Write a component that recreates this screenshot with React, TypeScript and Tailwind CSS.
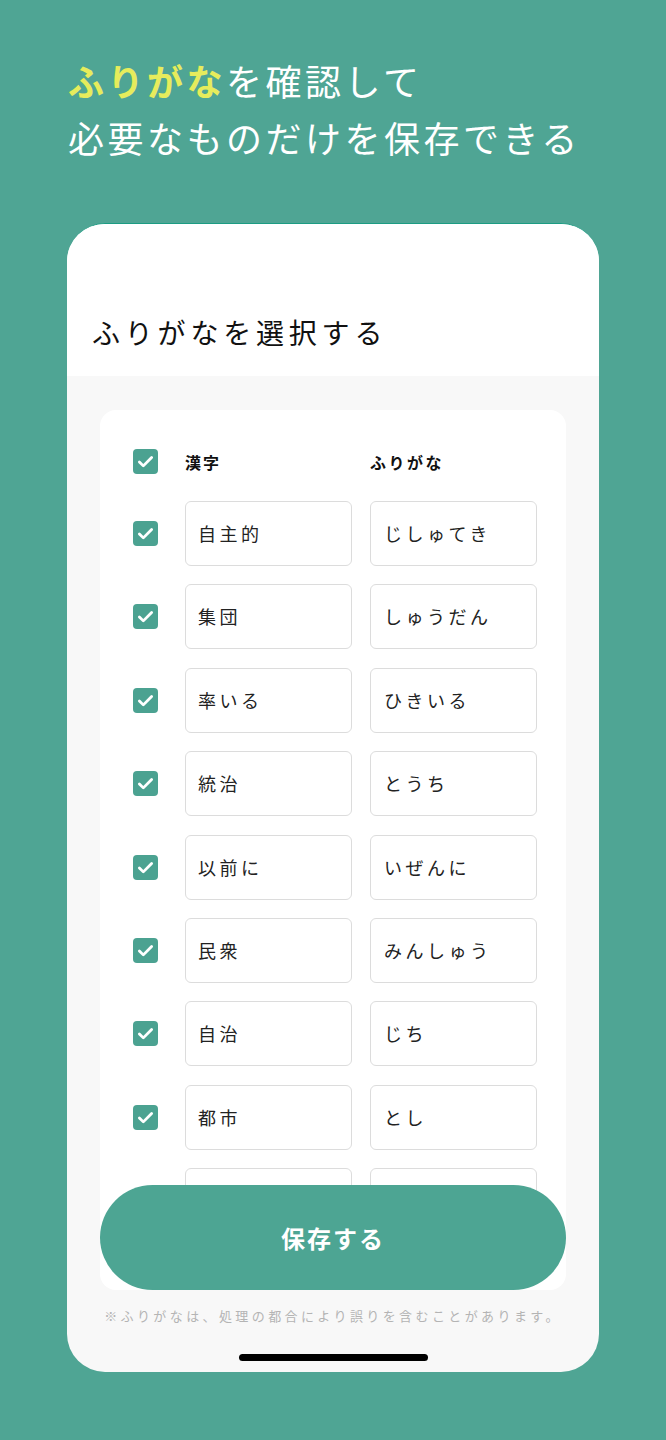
import React from "react";

const rows: [string, string][] = [
  ["自主的", "じしゅてき"],
  ["集団", "しゅうだん"],
  ["率いる", "ひきいる"],
  ["統治", "とうち"],
  ["以前に", "いぜんに"],
  ["民衆", "みんしゅう"],
  ["自治", "じち"],
  ["都市", "とし"],
  ["", ""],
];

const font = { fontFamily: '"Noto Sans CJK JP", "Noto Sans", sans-serif' };

function Check() {
  return (
    <div className="w-[25px] h-[25px] shrink-0 rounded-[4px] bg-[#4ba291] flex items-center justify-center">
      <svg width="21" height="21" viewBox="0 0 24 24" fill="none" stroke="white" strokeWidth="3.2" strokeLinecap="round" strokeLinejoin="round">
        <path d="M5 12.5l4.5 4.5L19 7.5" />
      </svg>
    </div>
  );
}

export default function App() {
  return (
    <div className="w-[666px] h-[1440px] bg-[#4fa594] overflow-hidden" style={font}>
      <div className="pt-[52px] pl-[68px] text-[36px] leading-[57px] tracking-[3.5px] text-white">
        <div>
          <span className="text-[#e6ec5c] font-bold">ふりがな</span>
          <span>を確認して</span>
        </div>
        <div>必要なものだけを保存できる</div>
      </div>

      <div className="mt-[57px] mx-[67px] w-[532px] h-[1149px] rounded-[38px] bg-[#f8f8f8] overflow-hidden border-t border-[#1b9c83] flex flex-col">
        <div className="h-[152px] bg-white pt-[88px] pl-[25px] text-[28px] leading-[40px] tracking-[4.8px] text-[#111]">
          ふりがなを選択する
        </div>
        <div className="pt-[34px] px-[33px]">
          <div className="relative w-[466px] h-[880px] bg-white rounded-[16px] overflow-hidden">
            <div className="pt-[39px] pl-[33px] flex flex-col">
              <div className="flex items-center h-[25px]">
                <Check />
                <div className="ml-[27px] w-[185px] text-[16px] font-bold tracking-[2px] text-[#111]">漢字</div>
                <div className="text-[16px] font-bold tracking-[2.5px] text-[#111]">ふりがな</div>
              </div>
              <div className="mt-[27px] flex flex-col gap-[18.4px]">
                {rows.map(([k, f], i) => (
                  <div key={i} className="flex items-center h-[65px]">
                    <Check />
                    <div className="ml-[27px] w-[167px] h-[65px] border border-[#dcdcdc] rounded-[6px] flex items-center pl-[12px] text-[18px] tracking-[3.5px] text-[#222]">
                      {k}
                    </div>
                    <div className="ml-[18px] w-[167px] h-[65px] border border-[#dcdcdc] rounded-[6px] flex items-center pl-[13px] text-[18px] tracking-[3.5px] text-[#222]">
                      {f}
                    </div>
                  </div>
                ))}
              </div>
            </div>
            <div className="absolute left-0 right-0 bottom-0 h-[105px] rounded-full bg-[#4da593] flex items-center justify-center text-white text-[24px] font-bold tracking-[2px]">
              保存する
            </div>
          </div>
          <div className="mt-[16px] text-center text-[13px] leading-[20px] tracking-[3.4px] text-[#b4b4b4]">
            ※ふりがなは、処理の都合により誤りを含むことがあります。
          </div>
          <div className="mt-[28px] mx-auto w-[189px] h-[7px] rounded-full bg-black" />
        </div>
      </div>
    </div>
  );
}
